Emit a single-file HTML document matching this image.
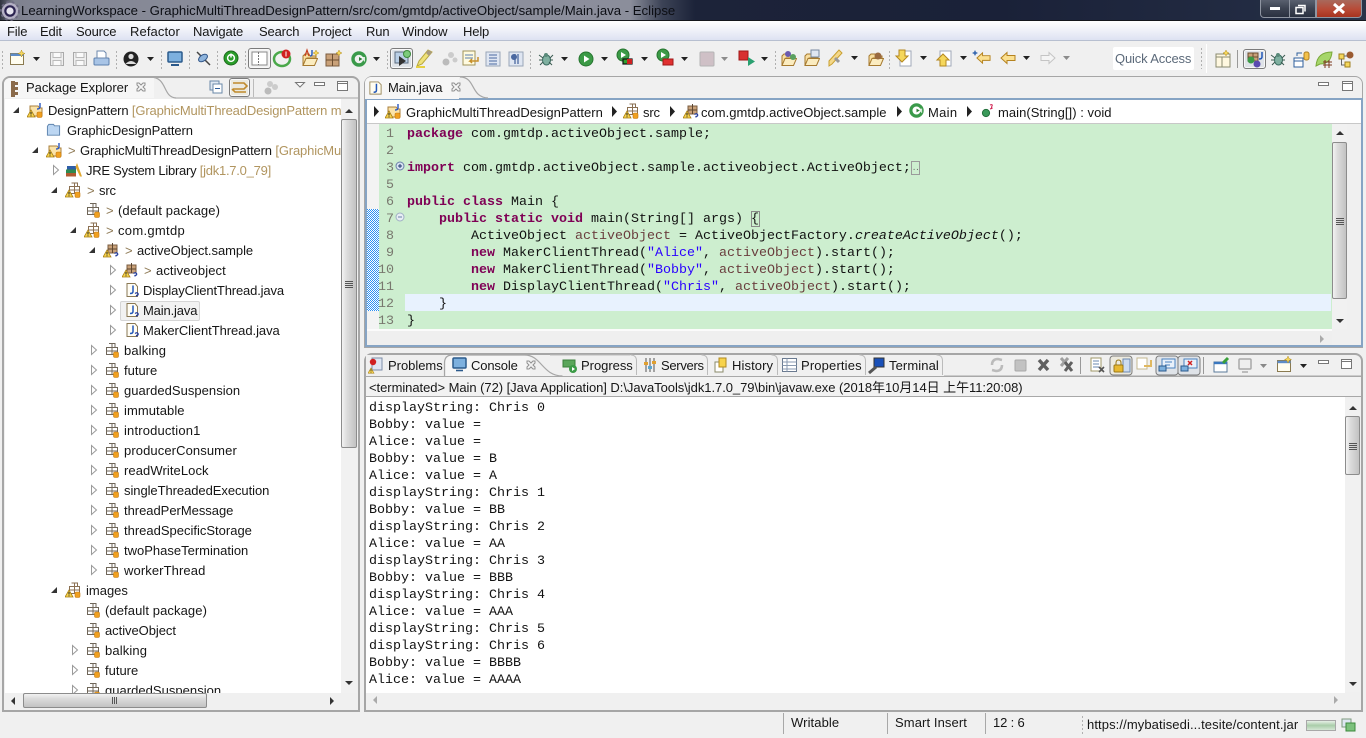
<!DOCTYPE html>
<html lang="en"><head><meta charset="utf-8"><title>Eclipse</title>
<style>
html,body{margin:0;padding:0}
body{position:relative;width:1366px;height:738px;overflow:hidden;background:#f0f0f0}
div{position:absolute;box-sizing:border-box}
.t{position:absolute;white-space:pre;font:13px/20px "Liberation Sans","Noto Sans CJK SC",sans-serif;letter-spacing:-.15px;color:#161616;margin-top:1px}
.z{margin-top:0}
.d{color:#b1955f}
.g{color:#8f7a55}
.m{position:absolute;white-space:pre;font:13.33px/17px "Liberation Mono",monospace;color:#111;margin-top:1px}
.m b{color:#7f0055}.m i{color:#2a00ff;font-style:normal}.m u{color:#6a3e3e;text-decoration:none}.m em{font-style:italic}
.n{position:absolute;width:16px;text-align:right;left:378px;font:13.33px/17px "Liberation Mono",monospace;color:#78786e;margin-top:1px}
.vt{background:linear-gradient(90deg,#f2f2f2,#dcdcdc 35%,#c2c2c2);border:1px solid #8c8c8c;border-radius:2px}
.ht{background:linear-gradient(180deg,#f2f2f2,#dcdcdc 35%,#c2c2c2);border:1px solid #8c8c8c;border-radius:2px}
.tg{background:#dfe3e8;border:1px solid #7b7b7b;border-radius:3px;box-shadow:inset 0 0 0 1px #f8f8f8}
</style></head><body>

<!-- title bar -->
<div style="left:0;top:0;width:1366px;height:21px;background:linear-gradient(90deg,#30343f 0,#7f8290 14px,#8e919e 300px,#8b8e9b 630px,#3c4356 662px,#1c2339 695px,#1a2138 1000px,#222b42 1250px,#2a3348 1366px)"></div>
<div style="left:0;top:20px;width:1366px;height:1px;background:#15171c"></div>
<div style="left:1260px;top:0;width:56px;height:18px;background:linear-gradient(#59606f,#3c4352 50%,#2a3040);border:1px solid #8f95a2;border-top:0;border-radius:0 0 0 4px"></div>
<div style="left:1289px;top:0;width:1px;height:17px;background:#8f95a2"></div>
<div style="left:1316px;top:0;width:46px;height:18px;background:linear-gradient(#a8695c,#b84a36 55%,#a8331f);border:1px solid #8f95a2;border-top:0;border-radius:0 0 4px 0"></div>
<div class="t z" style="left:21px;top:1px;font-size:13.18px;letter-spacing:0;color:#0c0e14;line-height:20px">LearningWorkspace - GraphicMultiThreadDesignPattern/src/com/gmtdp/activeObject/sample/Main.java - Eclipse</div>

<!-- menu bar -->
<div style="left:0;top:21px;width:1366px;height:20px;background:linear-gradient(#ffffff,#f6f7fb 30%,#dde2f2);border-bottom:1px solid #b7bfd0"></div>
<span class="t z" style="left:7px;top:22px">File</span>
<span class="t z" style="left:40px;top:22px">Edit</span>
<span class="t z" style="left:76px;top:22px">Source</span>
<span class="t z" style="left:130px;top:22px;letter-spacing:.1px">Refactor</span>
<span class="t z" style="left:193px;top:22px">Navigate</span>
<span class="t z" style="left:259px;top:22px">Search</span>
<span class="t z" style="left:312px;top:22px">Project</span>
<span class="t z" style="left:366px;top:22px">Run</span>
<span class="t z" style="left:402px;top:22px">Window</span>
<span class="t z" style="left:463px;top:22px">Help</span>

<!-- toolbar toggles -->
<div class="tg" style="left:248px;top:48px;width:23px;height:21px;background:#f2f2f2"></div>
<div class="tg" style="left:390px;top:48px;width:23px;height:21px"></div>
<div class="tg" style="left:1243px;top:49px;width:23px;height:20px"></div>
<div style="left:1113px;top:47px;width:81px;height:23px;background:#fff;border-radius:2px"></div>
<span class="t" style="left:1115px;top:48px;color:#5c6a7a;letter-spacing:-.15px">Quick Access</span>

<!-- package explorer frame -->
<div style="left:2px;top:76px;width:358px;height:636px;background:#f0f0f0;border:2px solid #a6a6a6;border-radius:8px 8px 0 0"></div>
<div style="left:4px;top:78px;width:150px;height:20px;background:#f6f6f6;border-radius:6px 0 0 0"></div>
<div style="left:5px;top:99px;width:336px;height:594px;background:#fff"></div>
<div class="tg" style="left:229px;top:78px;width:21px;height:19px;background:#eceadf"></div>
<span class="t" style="left:26px;top:77px;letter-spacing:-.03px">Package Explorer</span>

<!-- tree -->
<div style="left:0;top:0;width:341px;height:693px;clip-path:inset(100px 0 0 5px)">
<div style="left:120px;top:301px;width:80px;height:20px;background:#f2f2f2;border:1px solid #d5d5d5;border-radius:2px"></div>
<span class="t" style="left:48px;top:100px">DesignPattern <span class="d">[GraphicMultiThreadDesignPattern master]</span></span>
<span class="t" style="left:67px;top:120px;letter-spacing:-.1px">GraphicDesignPattern</span>
<span class="t" style="left:68px;top:140px"><span class="g">&gt;</span></span><span class="t" style="left:80px;top:140px">GraphicMultiThreadDesignPattern <span class="d">[GraphicMultiThreadDesignPattern]</span></span>
<span class="t" style="left:86px;top:160px;letter-spacing:-.25px">JRE System Library <span class="d">[jdk1.7.0_79]</span></span>
<span class="t" style="left:87px;top:180px"><span class="g">&gt;</span></span><span class="t" style="left:99px;top:180px">src</span>
<span class="t" style="left:106px;top:200px"><span class="g">&gt;</span></span><span class="t" style="left:118px;top:200px;letter-spacing:.09px">(default package)</span>
<span class="t" style="left:106px;top:220px"><span class="g">&gt;</span></span><span class="t" style="left:118px;top:220px;letter-spacing:.3px">com.gmtdp</span>
<span class="t" style="left:125px;top:240px"><span class="g">&gt;</span></span><span class="t" style="left:137px;top:240px;letter-spacing:-.05px">activeObject.sample</span>
<span class="t" style="left:144px;top:260px"><span class="g">&gt;</span></span><span class="t" style="left:156px;top:260px;letter-spacing:.1px">activeobject</span>
<span class="t" style="left:143px;top:280px">DisplayClientThread.java</span>
<span class="t" style="left:143px;top:300px">Main.java</span>
<span class="t" style="left:143px;top:320px;letter-spacing:-.06px">MakerClientThread.java</span>
<span class="t" style="left:124px;top:340px;letter-spacing:.13px">balking</span>
<span class="t" style="left:124px;top:360px;letter-spacing:0">future</span>
<span class="t" style="left:124px;top:380px;letter-spacing:.03px">guardedSuspension</span>
<span class="t" style="left:124px;top:400px;letter-spacing:.07px">immutable</span>
<span class="t" style="left:124px;top:420px;letter-spacing:.16px">introduction1</span>
<span class="t" style="left:124px;top:440px;letter-spacing:.1px">producerConsumer</span>
<span class="t" style="left:124px;top:460px;letter-spacing:.08px">readWriteLock</span>
<span class="t" style="left:124px;top:480px;letter-spacing:-.06px">singleThreadedExecution</span>
<span class="t" style="left:124px;top:500px;letter-spacing:-.03px">threadPerMessage</span>
<span class="t" style="left:124px;top:520px;letter-spacing:0">threadSpecificStorage</span>
<span class="t" style="left:124px;top:540px;letter-spacing:0">twoPhaseTermination</span>
<span class="t" style="left:124px;top:560px;letter-spacing:.1px">workerThread</span>
<span class="t" style="left:86px;top:580px;letter-spacing:0">images</span>
<span class="t" style="left:105px;top:600px;letter-spacing:.09px">(default package)</span>
<span class="t" style="left:105px;top:620px;letter-spacing:-.05px">activeObject</span>
<span class="t" style="left:105px;top:640px;letter-spacing:.13px">balking</span>
<span class="t" style="left:105px;top:660px;letter-spacing:0">future</span>
<span class="t" style="left:105px;top:680px;letter-spacing:.03px">guardedSuspension</span>
</div>
<!-- tree scrollbars -->
<div style="left:341px;top:100px;width:16px;height:593px;background:#f1f1f1"></div>
<div class="vt" style="left:341px;top:119px;width:16px;height:329px"></div>
<div style="left:5px;top:693px;width:352px;height:16px;background:#f0f0f0"></div>
<div class="ht" style="left:23px;top:693px;width:184px;height:15px"></div>

<!-- editor -->
<div style="left:364px;top:76px;width:999px;height:272px;background:#f0f0f0;border:1px solid #a6a6a6;border-radius:8px 8px 0 0"></div>
<div style="left:365px;top:98px;width:998px;height:249px;border:2px solid #86a4c4;background:#f0f0f0"></div>
<div style="left:365px;top:77px;width:94px;height:22px;background:#f6f6f6;border-radius:6px 0 0 0"></div>
<span class="t" style="left:388px;top:77px">Main.java</span>
<div style="left:367px;top:100px;width:994px;height:24px;background:#fff;border-bottom:1px solid #c8c8c8"></div>
<span class="t" style="left:406px;top:102px;letter-spacing:.01px">GraphicMultiThreadDesignPattern</span>
<span class="t" style="left:643px;top:102px">src</span>
<span class="t" style="left:701px;top:102px;letter-spacing:.02px">com.gmtdp.activeObject.sample</span>
<span class="t" style="left:928px;top:102px;letter-spacing:.3px">Main</span>
<span class="t" style="left:998px;top:102px;letter-spacing:.04px">main(String[]) : void</span>

<div style="left:367px;top:124px;width:12px;height:205px;background:#f3f3f3"></div>
<div style="left:379px;top:124px;width:953px;height:205px;background:#cdeecf"></div>
<div style="left:405px;top:294px;width:926px;height:17px;background:#e8f2fe"></div>
<div style="left:367px;top:329px;width:965px;height:2px;background:#fbfbfb"></div>
<div style="left:367px;top:331px;width:965px;height:14px;background:#efefef"></div>
<div style="left:1332px;top:124px;width:15px;height:205px;background:#f1f1f1"></div>
<div class="vt" style="left:1332px;top:142px;width:15px;height:157px"></div>

<span class="n" style="top:125px">1</span><span class="n" style="top:142px">2</span><span class="n" style="top:159px">3</span><span class="n" style="top:176px">5</span><span class="n" style="top:193px">6</span><span class="n" style="top:210px">7</span><span class="n" style="top:227px">8</span><span class="n" style="top:244px">9</span><span class="n" style="top:261px">10</span><span class="n" style="top:278px">11</span><span class="n" style="top:295px">12</span><span class="n" style="top:312px">13</span>

<span class="m" style="left:407px;top:125px"><b>package</b> com.gmtdp.activeObject.sample;</span>
<span class="m" style="left:407px;top:159px"><b>import</b> com.gmtdp.activeObject.sample.activeobject.ActiveObject;</span>
<span class="m" style="left:407px;top:193px"><b>public</b> <b>class</b> Main {</span>
<span class="m" style="left:439px;top:210px"><b>public</b> <b>static</b> <b>void</b> main(String[] args) {</span>
<span class="m" style="left:471px;top:227px">ActiveObject <u>activeObject</u> = ActiveObjectFactory.<em>createActiveObject</em>();</span>
<span class="m" style="left:471px;top:244px"><b>new</b> MakerClientThread(<i>"Alice"</i>, <u>activeObject</u>).start();</span>
<span class="m" style="left:471px;top:261px"><b>new</b> MakerClientThread(<i>"Bobby"</i>, <u>activeObject</u>).start();</span>
<span class="m" style="left:471px;top:278px"><b>new</b> DisplayClientThread(<i>"Chris"</i>, <u>activeObject</u>).start();</span>
<span class="m" style="left:439px;top:295px">}</span>
<span class="m" style="left:407px;top:312px">}</span>
<div style="left:911px;top:161px;width:9px;height:14px;border:1px solid #9a9a9a"></div>
<span class="m" style="left:912px;top:160px;color:#555;font-size:7px;letter-spacing:-1px">..</span>
<div style="left:751px;top:211px;width:9px;height:16px;border:1px solid #8a8a8a"></div>

<!-- console -->
<div style="left:364px;top:353px;width:999px;height:359px;background:#f0f0f0;border:2px solid #a6a6a6;border-radius:8px 8px 0 0"></div>
<div style="left:366px;top:355px;width:78px;height:21px;background:#efefef"></div>
<div style="left:446px;top:355px;width:84px;height:21px;background:#f6f6f6"></div>
<div style="left:366px;top:376px;width:995px;height:21px;background:#f2f2f2;border-bottom:1px solid #a8a8a8;border-top:1px solid #a8a8a8"></div>
<div style="left:366px;top:397px;width:979px;height:296px;background:#fff"></div>
<div style="left:1345px;top:399px;width:15px;height:293px;background:#f1f1f1"></div>
<div class="vt" style="left:1345px;top:416px;width:15px;height:59px"></div>

<span class="t" style="left:388px;top:355px;letter-spacing:-.03px">Problems</span>
<span class="t" style="left:471px;top:355px">Console</span>
<span class="t" style="left:581px;top:355px;letter-spacing:-.03px">Progress</span>
<span class="t" style="left:661px;top:355px;letter-spacing:-.3px">Servers</span>
<span class="t" style="left:732px;top:355px;letter-spacing:.1px">History</span>
<span class="t" style="left:801px;top:355px;letter-spacing:.15px">Properties</span>
<span class="t" style="left:889px;top:355px;letter-spacing:.1px">Terminal</span>
<span class="t" style="left:369px;top:377px;letter-spacing:-.05px">&lt;terminated&gt; Main (72) [Java Application] D:\JavaTools\jdk1.7.0_79\bin\javaw.exe (2018年10月14日 上午11:20:08)</span>

<span class="m" style="left:369px;top:399px">displayString: Chris 0</span>
<span class="m" style="left:369px;top:416px">Bobby: value =</span>
<span class="m" style="left:369px;top:433px">Alice: value =</span>
<span class="m" style="left:369px;top:450px">Bobby: value = B</span>
<span class="m" style="left:369px;top:467px">Alice: value = A</span>
<span class="m" style="left:369px;top:484px">displayString: Chris 1</span>
<span class="m" style="left:369px;top:501px">Bobby: value = BB</span>
<span class="m" style="left:369px;top:518px">displayString: Chris 2</span>
<span class="m" style="left:369px;top:535px">Alice: value = AA</span>
<span class="m" style="left:369px;top:552px">displayString: Chris 3</span>
<span class="m" style="left:369px;top:569px">Bobby: value = BBB</span>
<span class="m" style="left:369px;top:586px">displayString: Chris 4</span>
<span class="m" style="left:369px;top:603px">Alice: value = AAA</span>
<span class="m" style="left:369px;top:620px">displayString: Chris 5</span>
<span class="m" style="left:369px;top:637px">displayString: Chris 6</span>
<span class="m" style="left:369px;top:654px">Bobby: value = BBBB</span>
<span class="m" style="left:369px;top:671px">Alice: value = AAAA</span>

<!-- status bar -->
<span class="t z" style="left:791px;top:713px;letter-spacing:.1px">Writable</span>
<span class="t z" style="left:895px;top:713px;letter-spacing:.1px">Smart Insert</span>
<span class="t z" style="left:993px;top:713px">12 : 6</span>
<span class="t z" style="left:1087px;top:715px;letter-spacing:.1px">https://mybatisedi...tesite/content.jar</span>
<div style="left:783px;top:713px;width:1px;height:21px;background:#a8a8a8"></div>
<div style="left:887px;top:713px;width:1px;height:21px;background:#a8a8a8"></div>
<div style="left:985px;top:713px;width:1px;height:21px;background:#a8a8a8"></div>
<div style="left:1306px;top:720px;width:30px;height:11px;background:linear-gradient(#e6efe6,#a9cda9 50%,#d5e6d5);border:1px solid #a8a8a8"></div>

<!-- icons overlay -->
<svg width="1366" height="738" viewBox="0 0 1366 738" style="position:absolute;left:0;top:0" xmlns="http://www.w3.org/2000/svg">
<defs>
<pattern id="chk" x="0" y="0" width="2" height="2" patternUnits="userSpaceOnUse"><rect width="2" height="2" fill="#ffffff"/><rect width="1" height="1" fill="#2f90f2"/><rect x="1" y="1" width="1" height="1" fill="#2f90f2"/></pattern>
<clipPath id="tc"><rect x="5" y="100" width="336" height="593"/></clipPath>
<symbol id="tri" viewBox="0 0 16 16"><path d="M4 11 10 5v6z" fill="#333"/></symbol>
<symbol id="trc" viewBox="0 0 16 16"><path d="M5.5 3.5 10.500 8 5.500 12.500z" fill="#fff" stroke="#9a9a9a"/></symbol>
<symbol id="grid" viewBox="0 0 16 16"><path d="M2.500 5.500h11v7h-11zM8 1.500v11M5 1.500h6v4M2.500 9h11" fill="none" stroke="#6f6659"/><rect x="9.500" y="10" width="5" height="5.500" rx="1.500" fill="#f0a020" stroke="#c57a10" stroke-width=".6"/></symbol>
<symbol id="war" viewBox="0 0 16 16"><path d="M4 8 8 15H0z" fill="#f7d34c" stroke="#a87f14" stroke-width=".8"/><path d="M4 10v2.500M4 13.400v.8" stroke="#222"/></symbol>
<symbol id="pw" viewBox="0 0 16 16"><path d="M4.500 4.500h10v7h-10zM9.500 1v10.500M6.500 1h6v3.500M4.500 8h10" fill="none" stroke="#8a6f52"/><rect x="10" y="10" width="5" height="5.500" rx="1.500" fill="#f0a020" stroke="#c57a10" stroke-width=".6"/><use href="#war" width="16" height="16"/></symbol>
<symbol id="pq" viewBox="0 0 16 16"><path d="M5 3h9v8H5z" fill="#c9a179" stroke="#7b5d40"/><path d="M9.500 1v10M5 7h9" stroke="#5d4630"/><path d="M11.500 11.500q2-1.500 3 0t-1.500 2v1" fill="none" stroke="#203a9c" stroke-width="1.200"/><use href="#war" width="16" height="16"/></symbol>
<symbol id="pj" viewBox="0 0 16 16"><path d="M3 4h8l1.500 2H15v8H3z" fill="#fbe3a8" stroke="#a87f3c"/><path d="M13 1v4q0 2-3 2" fill="none" stroke="#2a57c0" stroke-width="1.400"/><rect x="10" y="10" width="5" height="5.500" rx="1.500" fill="#f0a020" stroke="#c57a10" stroke-width=".6"/><use href="#war" width="16" height="16"/></symbol>
<symbol id="jv" viewBox="0 0 16 16"><path d="M3 1.500h8l2.500 3v10H3z" fill="#fffdf5" stroke="#8a7854"/><path d="M9 3.500v6q0 2-3 2" fill="none" stroke="#2257b8" stroke-width="1.500"/><path d="M11 11.500q2-1.500 3 0t-1.500 2v1" fill="none" stroke="#203a9c" stroke-width="1.200"/></symbol>
<symbol id="jf" viewBox="0 0 16 16"><path d="M2 1.500h9l3 3v10H2z" fill="#fffdf2" stroke="#9b8a5e"/><path d="M9 3.500v7q0 2-3 2" fill="none" stroke="#2257b8" stroke-width="1.600"/></symbol>
<symbol id="fld" viewBox="0 0 16 16"><path d="M1.500 4 3 2h5l1 1.500h5.500v10h-13z" fill="#bcd6f2" stroke="#5d83ad"/></symbol>
<symbol id="jre" viewBox="0 0 16 16"><rect x="0" y="11" width="10" height="3.500" fill="#b05a30"/><rect x="0" y="7.500" width="10" height="3.500" fill="#2e8a50"/><rect x="1" y="4" width="9" height="3.500" fill="#2e5ea8"/><path d="M11 1l5 13.500h-2L9.500 5z" fill="#e0a830"/></symbol>
<symbol id="x" viewBox="0 0 12 12"><path d="M2 2l2 0 2 2 2-2 2 0 0 2-2 2 2 2 0 2-2 0-2-2-2 2-2 0 0-2 2-2-2-2z" fill="none" stroke="#909090"/></symbol>
<symbol id="mn" viewBox="0 0 12 12"><rect x=".5" y="3.500" width="10" height="3" fill="#fff" stroke="#777"/></symbol>
<symbol id="mx" viewBox="0 0 12 12"><path d="M.5 1.500h10v9H.5z" fill="#fff" stroke="#777"/><path d="M.5 3.500h10" stroke="#777"/></symbol>
<symbol id="new" viewBox="0 0 16 16"><path d="M1.500 3.500h13v11h-13z" fill="#fffdf0" stroke="#8a7a50"/><path d="M1.500 3.500h13v2.500h-13z" fill="#5d8cc8"/><path d="M12.500 0l1 2.500 2.500 1-2.500 1-1 2.500-1-2.500-2.500-1 2.500-1z" fill="#f5d75c" stroke="#b58f20" stroke-width=".5"/></symbol>
<symbol id="sv" viewBox="0 0 16 16"><path d="M1.500 1.500h13v13h-13z" fill="#eee" stroke="#aaa"/><path d="M4 1.500h8v5H4zM4 9.500h8v5H4z" fill="#fafafa" stroke="#bbb"/></symbol>
<symbol id="fo" viewBox="0 0 16 16"><path d="M1 14.500 1 5 3 3h4l1 2h6v2h-9z" fill="#f8dea0" stroke="#a67a30"/><path d="M1 14.500 4 7.500h11.500l-3 7z" fill="#fbecc0" stroke="#a67a30"/></symbol>
<symbol id="bug" viewBox="0 0 16 16"><ellipse cx="8.500" cy="9" rx="4" ry="5" fill="#7fb0a0" stroke="#3a6b60"/><circle cx="8" cy="4" r="2" fill="#5a8a7a"/><path d="M1 4l4 3M1 9h3M2 14l3-3M15 4l-3 3M15 9h-3M14 14l-3-3" stroke="#3a5b50"/></symbol>
<symbol id="run" viewBox="0 0 16 16"><circle cx="8" cy="8" r="7" fill="#3b9a46" stroke="#26752f"/><path d="M6 4.500v7l5.500-3.500z" fill="#fff"/></symbol>
<symbol id="al" viewBox="0 0 16 16"><path d="M1 8 7 2.500V5.500h8v5H7v3z" fill="#fbe090" stroke="#b5821e"/></symbol>
<symbol id="gc" viewBox="0 0 16 16"><circle cx="8" cy="8" r="6" fill="none" stroke="#3a9a4a" stroke-width="3.400"/><path d="M9 6h5v5z" fill="#fff" opacity=".8"/><path d="M8 6l3.500 2-3.500 2z" fill="#2e7d38"/></symbol>
</defs>

<!-- change ruler -->
<rect x="367" y="209" width="12" height="102" fill="url(#chk)" shape-rendering="crispEdges"/>

<!-- eclipse logo -->
<circle cx="10" cy="11" r="7" fill="#2b2350" stroke="#b4b0c4" stroke-width="2.500"/><circle cx="10" cy="11" r="3.600" fill="#e6e4ee"/><circle cx="10" cy="11" r="9" fill="none" stroke="#6d6a82" stroke-dasharray="2.500 3" stroke-width="2"/>

<!-- window buttons -->
<rect x="1270" y="7" width="10" height="3" fill="#fff"/>
<path d="M1298 5.500h7v6M1296 7.500h7v6h-7z" fill="none" stroke="#fff" stroke-width="1.500"/>
<path d="M1334 4l10 9M1344 4l-10 9" stroke="#fff" stroke-width="3"/>

<!-- toolbar grips -->
<path d="M2.500 51v19M116.500 51v19M161.500 51v19M189.500 51v19M217.500 51v19M245.500 51v19M387.500 51v19M530.500 51v19M775.500 51v19M889.500 51v19M1201.500 48v21" stroke="#b0b0b0" stroke-dasharray="2 2" fill="none"/>
<path d="M1206.500 44v29" stroke="#fff"/><path d="M1237.500 50v18" stroke="#999"/>

<!-- toolbar dropdowns -->
<path d="M33 57h7l-3.500 4zM147 57h7l-3.500 4zM373 57h7l-3.500 4zM561 57h7l-3.500 4zM601 57h7l-3.500 4zM641 57h7l-3.500 4zM681 57h7l-3.500 4zM761 57h7l-3.500 4zM851 56h7l-3.500 4zM920 56h7l-3.500 4zM960 56h7l-3.500 4zM1023 56h7l-3.500 4z" fill="#222"/>
<path d="M721 57h7l-3.500 4zM1063 56h7l-3.500 4z" fill="#8c8c8c"/>

<!-- toolbar icons -->
<use href="#new" x="9" y="50" width="16" height="16"/>
<use href="#sv" x="49" y="51" width="16" height="16"/>
<use href="#sv" x="72" y="51" width="16" height="16"/>
<g><rect x="94" y="58" width="15" height="7" rx="1" fill="#a8c4e6" stroke="#5d7fae"/><path d="M97 51h7l2 2v5h-9z" fill="#fff" stroke="#6d88ad"/></g>
<circle cx="131" cy="59" r="7.500" fill="#222"/><circle cx="131" cy="56.500" r="2.600" fill="#ddd"/><path d="M125.500 64q5.500-6 11 0z" fill="#ddd"/>
<rect x="168" y="52" width="14" height="10" rx="1" fill="#7db0de" stroke="#2b5a8c" stroke-width="1.500"/><path d="M171 65h8" stroke="#2b5a8c" stroke-width="2"/>
<path d="M197 52l13 13" stroke="#444" stroke-width="1.500"/><ellipse cx="203" cy="58" rx="5" ry="3" transform="rotate(-35 203 58)" fill="#8eb4dc" stroke="#34588a"/>
<circle cx="231" cy="58" r="7" fill="#2a9d2a" stroke="#1c6a1c"/><circle cx="231" cy="58" r="3.400" fill="none" stroke="#fff" stroke-width="1.500"/><path d="M231 53.500v4" stroke="#fff" stroke-width="1.500"/>
<rect x="252" y="52" width="15" height="13" fill="#fff" stroke="#8a8a8a"/><path d="M258.500 52v13" stroke="#777" stroke-dasharray="2 1"/>
<ellipse cx="282" cy="59" rx="8" ry="7" fill="none" stroke="#4aa84a" stroke-width="2.500"/><circle cx="286" cy="54" r="4.500" fill="#d02020"/><path d="M286 51.500v5" stroke="#fff"/>
<use href="#fo" x="302" y="51" width="16" height="16"/><path d="M305 56l2-6 2 6" fill="none" stroke="#c73a1a" stroke-width="1.200"/><path d="M312 50v4q0 2-2 2" fill="none" stroke="#2257b8" stroke-width="1.400"/><path d="M316 50l1 2 2 1-2 1-1 2-1-2-2-1 2-1z" fill="#f5d75c" stroke="#b58f20" stroke-width=".5"/>
<rect x="326" y="54" width="13" height="12" fill="#c9a179" stroke="#7b5d40"/><path d="M332.500 54v12M326 60h13" stroke="#6b4d30"/><path d="M339 50l1 2 2 1-2 1-1 2-1-2-2-1 2-1z" fill="#f5d75c" stroke="#b58f20" stroke-width=".5"/>
<use href="#gc" x="351" y="51" width="16" height="16"/>
<rect x="395" y="52" width="13" height="11" fill="#b9cfe6" stroke="#5d6d80"/><path d="M399 56v10l7-5z" fill="#333"/><circle cx="407" cy="54" r="3.500" fill="#7ccb7c" stroke="#3c8a3c"/>
<path d="M417 66l5-2 10-12-4-2-9 11z" fill="#efe27a" stroke="#b8a840"/><path d="M416 67h9" stroke="#e6d040" stroke-width="2"/><path d="M428 50l4 2-3 4-3-3z" fill="#a89a80"/>
<circle cx="446" cy="62" r="3.500" fill="#bbb"/><circle cx="451" cy="55" r="3" fill="#ccc"/><circle cx="455" cy="60" r="2.500" fill="#ccc"/>
<rect x="463" y="51" width="12" height="14" fill="#fffbe0" stroke="#a0935a"/><path d="M465 55h8M465 58h8" stroke="#5d7fae"/><path d="M478 57v4h-8l2-2m-2 2 2 2" fill="none" stroke="#c7902a" stroke-width="1.500"/>
<rect x="486" y="52" width="14" height="14" fill="#dfe6f2" stroke="#9aa6b8"/><path d="M489 55h8M489 58h8M489 61h8M489 64h8" stroke="#4a68a0"/>
<rect x="509" y="52" width="14" height="14" fill="#dfe6f2" stroke="#9aa6b8"/><path d="M518 54v10M515 54v10" stroke="#4a68a0" stroke-width="1.300"/><circle cx="514" cy="57" r="3" fill="#4a68a0"/>
<use href="#bug" x="538" y="51" width="16" height="16"/>
<use href="#run" x="578" y="51" width="16" height="16"/>
<circle cx="623" cy="55" r="6" fill="#3b9a46" stroke="#26752f"/><path d="M621 52v6l5-3z" fill="#fff"/><rect x="623" y="59" width="9" height="5" fill="#2ea02e" stroke="#111" stroke-width="1.200"/><rect x="627" y="59" width="5" height="5" fill="#d02020"/>
<circle cx="663" cy="55" r="6" fill="#3b9a46" stroke="#26752f"/><path d="M661 52v6l5-3z" fill="#fff"/><rect x="663" y="59" width="10" height="6" fill="#e03030" stroke="#a01818"/>
<rect x="700" y="52" width="14" height="14" rx="1" fill="#cfc0c6" stroke="#b5b5b5"/>
<rect x="739" y="51" width="9" height="9" fill="#d83030" stroke="#a01818"/><path d="M748 57v9l7-4.500z" fill="#2aa070"/>
<use href="#fo" x="781" y="51" width="16" height="16"/><circle cx="788" cy="54" r="3" fill="#6a5ab0"/><circle cx="793" cy="57" r="3" fill="#5aa060"/>
<use href="#fo" x="804" y="51" width="16" height="16"/><rect x="811" y="50" width="8" height="7" fill="#dfe6f2" stroke="#7788a0"/>
<path d="M829 66l3-2 10-11-3-3-10 11z" fill="#f4d88a" stroke="#c9a030"/><path d="M835 58l4 4" stroke="#999" stroke-width="3"/>
<use href="#fo" x="868" y="51" width="16" height="16"/><circle cx="878" cy="56" r="3.500" fill="#9a6a40"/>
<rect x="900" y="51" width="11" height="15" fill="#fff" stroke="#a0a8b8"/><path d="M899 50h6v6h3l-6 6-6-6h3z" fill="#f5d75c" stroke="#b58820"/>
<rect x="940" y="51" width="11" height="15" fill="#fff" stroke="#a0a8b8"/><path d="M937 60l6-6 6 6h-3v6h-6v-6z" fill="#f5d75c" stroke="#b58820"/>
<use href="#al" x="976" y="50" width="15" height="16"/><path d="M975 50l1 2 2 1-2 1-1 2-1-2-2-1 2-1z" fill="#3a6ab0"/>
<use href="#al" x="1000" y="50" width="16" height="16"/>
<g transform="translate(1056 50) scale(-1 1)"><path d="M1 8 7 2.500V5.500h8v5H7v3z" fill="#f4f4f4" stroke="#c4c4c4"/></g>

<!-- perspective icons -->
<rect x="1216" y="54" width="14" height="13" fill="#fff8e0" stroke="#8a8a70"/><path d="M1216 57h14M1222 57v10" stroke="#8a8a70"/><path d="M1226 50l1 2 2 1-2 1-1 2-1-2-2-1 2-1z" fill="#f5d75c" stroke="#b58f20" stroke-width=".5"/>
<path d="M1248 53h10v8h-10zM1253 53v8M1248 57h10" fill="#c9a179" stroke="#6b4d30"/><circle cx="1251" cy="60" r="3.500" fill="#3b9a46"/><circle cx="1257" cy="64" r="3.500" fill="#5a4ab0"/><path d="M1262 52v5q0 2-3 2" fill="none" stroke="#2257b8" stroke-width="1.500"/>
<use href="#bug" x="1270" y="51" width="16" height="16"/>
<rect x="1294" y="58" width="9" height="9" fill="#fff" stroke="#2f5f9c"/><path d="M1294 61h9" stroke="#2f5f9c"/><rect x="1304" y="52" width="5" height="8" rx="2" fill="#f2c04a" stroke="#b08020"/><path d="M1297 56v-3h5" fill="none" stroke="#2f5f9c"/>
<path d="M1316 66q1-14 16-14-1 12-12 12z" fill="#a6d66a" stroke="#7aa83a"/><path d="M1323 62h9M1323 65h9M1325 60v8M1329 60v8" stroke="#7b3a20"/>
<rect x="1339" y="54" width="5" height="5" fill="#f5d75c" stroke="#a08020"/><rect x="1345" y="62" width="5" height="5" fill="#f5d75c" stroke="#a08020"/><circle cx="1350" cy="55" r="3.500" fill="#9a5a30"/><path d="M1341.500 59v6h3M1344 56h3" fill="none" stroke="#666"/>

<!-- package explorer chrome -->
<path d="M150 77c18 0 12 20 26 21" fill="none" stroke="#a6a6a6" stroke-width="1.200"/>
<path d="M176 98h182" stroke="#a6a6a6"/>
<path d="M11 81h4v16h-4zM15 82h3v3h-3zM15 87h3v3h-3zM15 92h3v3h-3z" fill="#8a6a4a"/>
<use href="#x" x="135" y="81" width="12" height="12"/>
<rect x="210" y="81" width="9" height="9" fill="#dfe8f2" stroke="#6a88a8"/><rect x="213" y="84" width="9" height="9" fill="#fff" stroke="#6a88a8"/><path d="M215 88.500h5" stroke="#2f5f9c"/>
<path d="M233 83h11l3 3-3 3H233M246 92h-11l-3-3" fill="none" stroke="#c08a2c" stroke-width="1.600"/>
<path d="M253.500 79v18" stroke="#bbb"/>
<circle cx="268" cy="91" r="3.500" fill="#bbb"/><circle cx="270" cy="84" r="3" fill="#ccc"/><circle cx="275" cy="87" r="3" fill="#ccc"/>
<path d="M295.500 82.500h9l-4.500 4.500z" fill="#fff" stroke="#777"/>
<use href="#mn" x="314" y="79" width="12" height="12"/>
<use href="#mx" x="337" y="80" width="12" height="12"/>

<!-- tree icons -->
<g clip-path="url(#tc)">
<use href="#tri" x="9" y="102" width="16" height="16"/>
<use href="#pj" x="27" y="102" width="16" height="16"/>
<use href="#fld" x="46" y="122" width="15" height="16"/>
<use href="#tri" x="28" y="142" width="16" height="16"/>
<use href="#pj" x="46" y="142" width="16" height="16"/>
<use href="#trc" x="48" y="162" width="16" height="16"/>
<use href="#jre" x="66" y="162" width="16" height="16"/>
<use href="#tri" x="47" y="182" width="16" height="16"/>
<use href="#pw" x="65" y="182" width="16" height="16"/>
<use href="#grid" x="85" y="202" width="16" height="16"/>
<use href="#tri" x="66" y="222" width="16" height="16"/>
<use href="#pw" x="84" y="222" width="16" height="16"/>
<use href="#tri" x="85" y="242" width="16" height="16"/>
<use href="#pq" x="103" y="242" width="16" height="16"/>
<use href="#trc" x="105" y="262" width="16" height="16"/>
<use href="#pq" x="122" y="262" width="16" height="16"/>
<use href="#trc" x="105" y="282" width="16" height="16"/><use href="#jv" x="124" y="282" width="16" height="16"/>
<use href="#trc" x="105" y="302" width="16" height="16"/><use href="#jv" x="124" y="302" width="16" height="16"/>
<use href="#trc" x="105" y="322" width="16" height="16"/><use href="#jv" x="124" y="322" width="16" height="16"/>
<use href="#trc" x="86" y="342" width="16" height="16"/><use href="#grid" x="104" y="342" width="16" height="16"/>
<use href="#trc" x="86" y="362" width="16" height="16"/><use href="#grid" x="104" y="362" width="16" height="16"/>
<use href="#trc" x="86" y="382" width="16" height="16"/><use href="#grid" x="104" y="382" width="16" height="16"/>
<use href="#trc" x="86" y="402" width="16" height="16"/><use href="#grid" x="104" y="402" width="16" height="16"/>
<use href="#trc" x="86" y="422" width="16" height="16"/><use href="#grid" x="104" y="422" width="16" height="16"/>
<use href="#trc" x="86" y="442" width="16" height="16"/><use href="#grid" x="104" y="442" width="16" height="16"/>
<use href="#trc" x="86" y="462" width="16" height="16"/><use href="#grid" x="104" y="462" width="16" height="16"/>
<use href="#trc" x="86" y="482" width="16" height="16"/><use href="#grid" x="104" y="482" width="16" height="16"/>
<use href="#trc" x="86" y="502" width="16" height="16"/><use href="#grid" x="104" y="502" width="16" height="16"/>
<use href="#trc" x="86" y="522" width="16" height="16"/><use href="#grid" x="104" y="522" width="16" height="16"/>
<use href="#trc" x="86" y="542" width="16" height="16"/><use href="#grid" x="104" y="542" width="16" height="16"/>
<use href="#trc" x="86" y="562" width="16" height="16"/><use href="#grid" x="104" y="562" width="16" height="16"/>
<use href="#tri" x="47" y="582" width="16" height="16"/><use href="#pw" x="65" y="582" width="16" height="16"/>
<use href="#grid" x="85" y="602" width="16" height="16"/>
<use href="#grid" x="85" y="622" width="16" height="16"/>
<use href="#trc" x="67" y="642" width="16" height="16"/><use href="#grid" x="85" y="642" width="16" height="16"/>
<use href="#trc" x="67" y="662" width="16" height="16"/><use href="#grid" x="85" y="662" width="16" height="16"/>
<use href="#trc" x="67" y="682" width="16" height="16"/><use href="#grid" x="85" y="682" width="16" height="16"/>
</g>

<!-- scrollbar glyphs -->
<path d="M345 113l4-4 4 4zM345 681l4 4 4-4zM15 697v8l-4-4zM330 697v8l4-4z" fill="#333"/>
<path d="M345 281.500h8M345 283.500h8M345 285.500h8M345 287.500h8" stroke="#555"/>
<path d="M112.500 697v7M114.500 697v7M116.500 697v7" stroke="#555"/>
<path d="M1336 135l4-4 4 4zM1336 319l4 4 4-4zM1349 410l4-4 4 4zM1349 682l4 4 4-4z" fill="#333"/>
<path d="M1336 218.500h8M1336 220.500h8M1336 222.500h8M1336 224.500h8M1349 443.500h8M1349 445.500h8M1349 447.500h8M1349 449.500h8" stroke="#555"/>
<path d="M1320 335v8l4-4zM1334 696v8l4-4z" fill="#aaa"/>
<path d="M377 696v8l-4-4z" fill="#aaa"/>

<!-- editor chrome -->
<path d="M460 77c16 0 10 20 28 21" fill="none" stroke="#a6a6a6" stroke-width="1.200"/>
<use href="#jf" x="368" y="80" width="15" height="16"/>
<use href="#x" x="450" y="81" width="12" height="12"/>
<use href="#mn" x="1318" y="79" width="12" height="12"/>
<use href="#mx" x="1342" y="80" width="12" height="12"/>

<!-- breadcrumb -->
<path d="M374 106v11l5-5.500zM612 106v11l5-5.500zM670 106v11l5-5.500zM897 106v11l5-5.500zM967 106v11l5-5.500z" fill="#222"/>
<use href="#pj" x="385" y="103" width="16" height="16"/>
<use href="#pw" x="623" y="103" width="16" height="16"/>
<use href="#pq" x="683" y="103" width="16" height="16"/>
<use href="#gc" x="909" y="103" width="15" height="15"/>
<circle cx="986" cy="113" r="3.600" fill="#3a9a5a" stroke="#23703c"/><path d="M990 105q3-1 2 1t0 2-2 1" fill="none" stroke="#d02050"/>

<!-- folding marks -->
<circle cx="400" cy="166" r="4" fill="#d8e2f2" stroke="#6a80a8"/><path d="M398 166h4M400 164v4" stroke="#223a70"/>
<circle cx="400" cy="217" r="4" fill="#e8eef4" stroke="#a0b0c4"/><path d="M398 217h4" stroke="#6a80a8"/>

<!-- console tabs -->
<path d="M444.500 376V363q0-8 8-8h72c17 0 18 21 38 21" fill="none" stroke="#a6a6a6" stroke-width="1.200"/>
<path d="M636.500 375v-14q0-6-6-6M707.500 375v-14q0-6-6-6M777.500 375v-14q0-6-6-6M865.500 375v-14q0-6-6-6M942.500 375v-14q0-6-6-6M630 355h-80" fill="none" stroke="#bbb"/>
<path d="M944 376h417" stroke="#a8a8a8"/>
<rect x="372" y="358" width="10" height="12" fill="#dfe6f2" stroke="#7e8ea8"/><circle cx="373" cy="362" r="3.200" fill="#d02020"/><use href="#war" x="368" y="362" width="12" height="12"/>
<rect x="453" y="358" width="13" height="10" rx="1" fill="#7db0de" stroke="#2b5a8c" stroke-width="1.500"/><path d="M456 370.500h7" stroke="#2b5a8c" stroke-width="1.600"/>
<use href="#x" x="525" y="359" width="12" height="12"/>
<rect x="563" y="360" width="12" height="7" fill="#5aa65a" stroke="#3b7f3b"/><circle cx="573" cy="369" r="4" fill="#3b9a46"/><path d="M572 367v4l3-2z" fill="#fff"/>
<path d="M646 358v14M650 358v14M654 358v14" stroke="#555"/><rect x="644" y="362" width="4" height="3" fill="#e0a030"/><rect x="648" y="366" width="4" height="3" fill="#5aa6d0"/><rect x="652" y="361" width="4" height="3" fill="#e0a030"/>
<rect x="715" y="362" width="8" height="10" fill="#fff" stroke="#8a8a6a"/><rect x="719" y="358" width="7" height="9" fill="#f7d34c" stroke="#b08a20"/>
<rect x="782.500" y="358.500" width="14" height="13" fill="#fff" stroke="#6a7a90"/><path d="M782.500 362h14M782.500 365.500h14M782.500 369h14M787 358.500v13" stroke="#8a9ab0"/>
<rect x="874" y="358" width="10" height="9" fill="#1a50b8" stroke="#333"/><path d="M869 373l7-6" stroke="#555" stroke-width="3"/>
<path d="M992 365q0-6 6-6l4 1M1002 365q0 6-6 6l-4-1" fill="none" stroke="#bbb" stroke-width="2.500"/>
<rect x="1015" y="360" width="11" height="11" rx="1" fill="#c2c2c2" stroke="#a8a8a8"/>
<path d="M1039 360l9 10M1048 360l-9 10" stroke="#606060" stroke-width="3.400"/>
<path d="M1061 358l7 8M1068 358l-7 8" stroke="#a0a0a0" stroke-width="3"/><path d="M1065 362l7 9M1072 362l-7 9" stroke="#606060" stroke-width="3"/>
<path d="M1080.500 357v17M1203.500 357v17" stroke="#999"/>
<rect x="1091" y="358" width="10" height="13" fill="#fff" stroke="#a09868"/><path d="M1093 361h6M1093 364h6M1093 367h6" stroke="#6a88b0"/><path d="M1099 367l5 5M1104 367l-5 5" stroke="#555" stroke-width="1.600"/>
<rect x="1110" y="356" width="22" height="19" rx="3" fill="#eceadf" stroke="#7b7b7b"/><rect x="1123" y="359" width="7" height="13" fill="#cddcf0" stroke="#6a88b0"/><rect x="1114" y="365" width="9" height="7" rx="1" fill="#e8b830" stroke="#9a7818"/><path d="M1116 365v-2q0-3 2.500-3t2.500 3v2" fill="none" stroke="#9a7818"/>
<rect x="1137" y="358" width="10" height="11" fill="#fff" stroke="#c4b890"/><path d="M1151 360v6h-7" fill="none" stroke="#e0b860" stroke-width="2"/>
<rect x="1156" y="356" width="22" height="19" rx="3" fill="#dfe3e8" stroke="#7b7b7b"/><rect x="1162" y="359" width="13" height="9" fill="#e8f0fa" stroke="#4a82c0"/><path d="M1165 362h7M1165 365h5" stroke="#4a82c0"/><rect x="1159" y="366" width="7" height="5" fill="#7db0de" stroke="#2b5a8c"/>
<rect x="1178" y="356" width="22" height="19" rx="3" fill="#dfe3e8" stroke="#7b7b7b"/><rect x="1184" y="359" width="13" height="9" fill="#e8f0fa" stroke="#4a82c0"/><path d="M1188 361l4 4M1192 361l-4 4" stroke="#d02020" stroke-width="1.500"/><rect x="1181" y="366" width="7" height="5" fill="#7db0de" stroke="#2b5a8c"/>
<rect x="1214" y="362" width="13" height="10" fill="#fff" stroke="#5a7a9a"/><path d="M1214 363h13" stroke="#3a78c0" stroke-width="2.400"/><path d="M1223 363l5-5" stroke="#3aa03a" stroke-width="3"/>
<rect x="1239" y="359" width="12" height="10" rx="1" fill="#eee" stroke="#a8a8a8" stroke-width="1.500"/><path d="M1242 372h6" stroke="#aaa" stroke-width="1.500"/>
<path d="M1260 364h7l-3.500 4z" fill="#888"/>
<rect x="1277.500" y="360.500" width="13" height="11" fill="#fffdf0" stroke="#8a7a50"/><path d="M1277.500 362h13" stroke="#5d8cc8" stroke-width="2.400"/><path d="M1288 356l1 2.500 2.500 1-2.500 1-1 2.500-1-2.500-2.500-1 2.500-1z" fill="#f5d75c" stroke="#b58f20" stroke-width=".5"/>
<path d="M1300 364h7l-3.500 4z" fill="#222"/>
<use href="#mn" x="1318" y="357" width="12" height="12"/>
<use href="#mx" x="1341" y="358" width="12" height="12"/>

<!-- status grip and icon -->
<path d="M1082.500 716v20" stroke="#b0b0b0" stroke-dasharray="2 2"/>
<rect x="1342" y="719" width="9" height="8" fill="#dfe6f2" stroke="#7e9a7e"/><rect x="1346" y="723" width="9" height="8" fill="#7cc07c" stroke="#3c8a3c"/>
</svg>
</body></html>
